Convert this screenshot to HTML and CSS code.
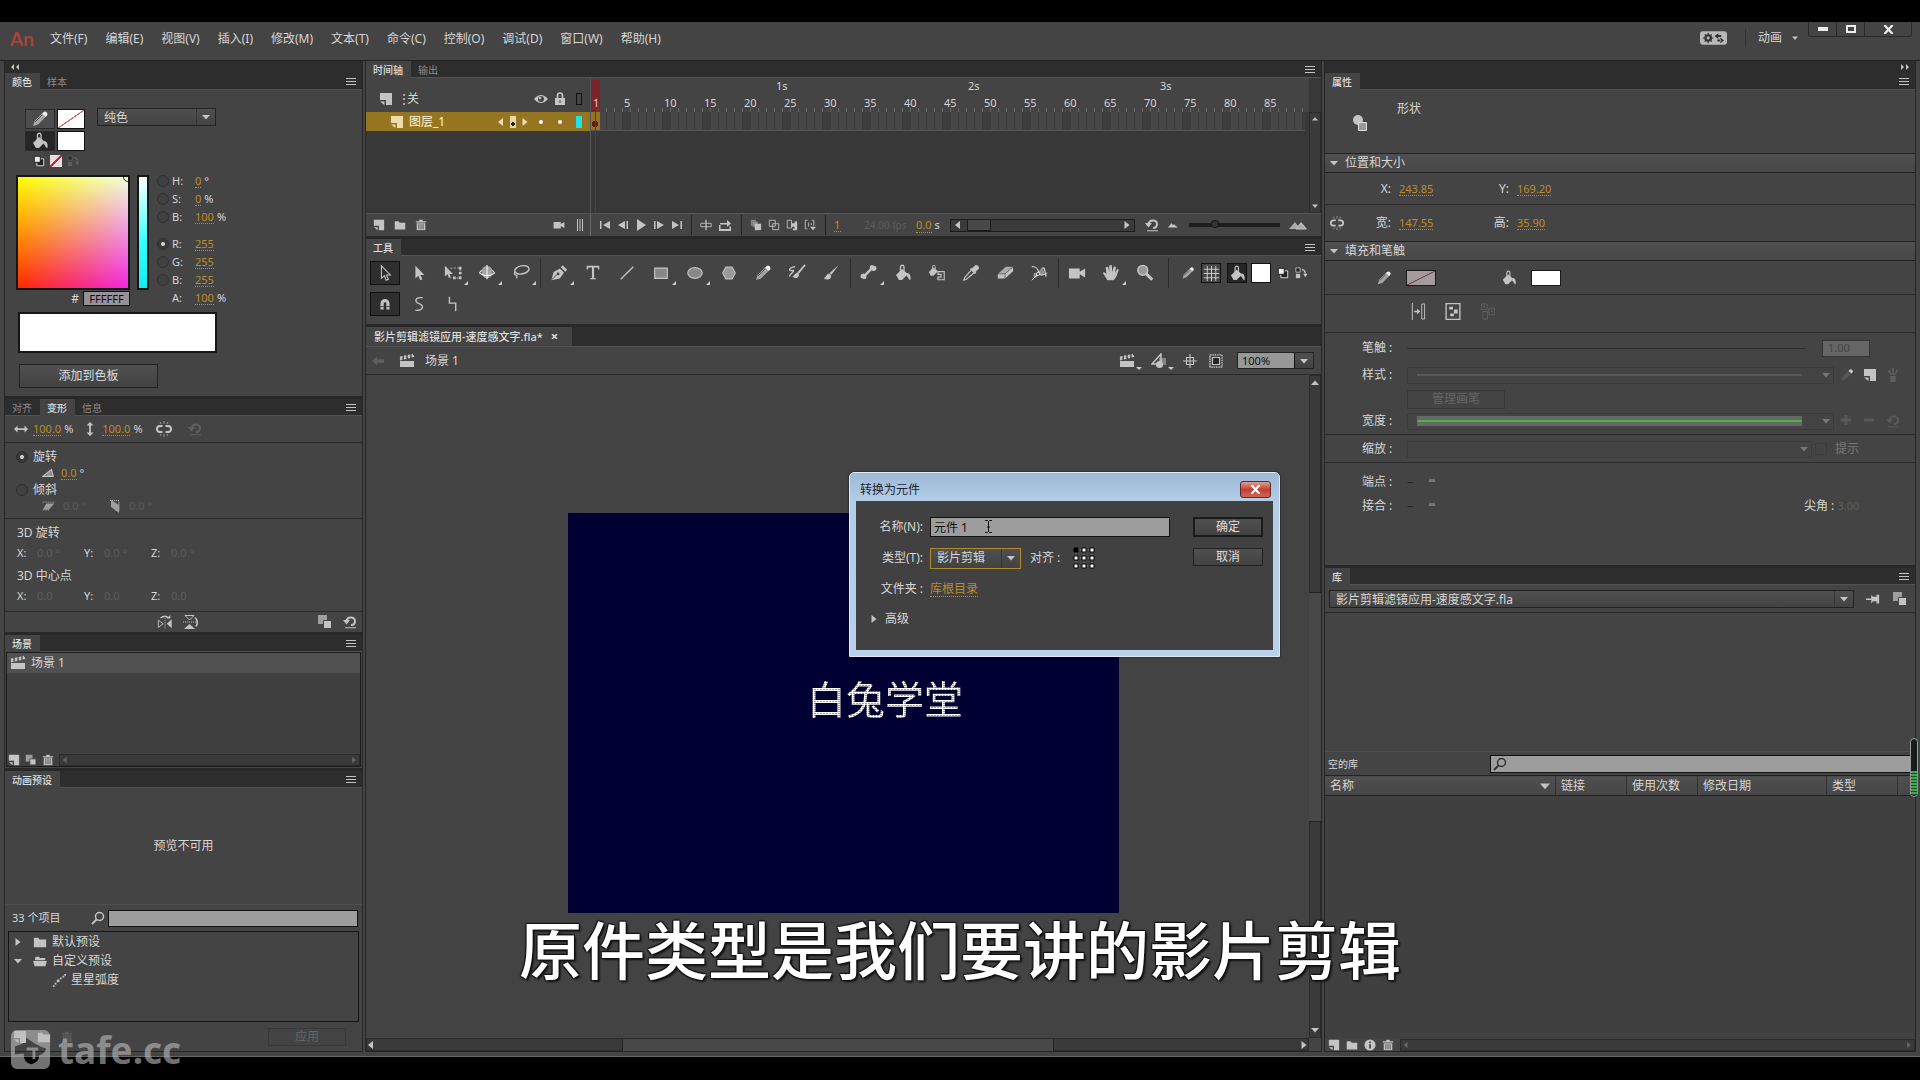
FILE: index.html
```html
<!DOCTYPE html>
<html lang="zh-CN">
<head>
<meta charset="utf-8">
<title>影片剪辑滤镜应用-速度感文字.fla</title>
<link rel="stylesheet" href="styles.css">
</head>
<body>
<svg class="sprite" aria-hidden="true">
  <symbol id="menu" viewBox="0 0 12 10"><path d="M1 1.500h10M1 4.500h10M1 7.500h10" stroke="currentColor"/></symbol>
  <symbol id="pencil" viewBox="0 0 18 18"><path d="M2 16l1.500-5L11 3.500l3.500 3.500L7 14.500z" opacity=".75"/><path d="M4 12l7-7" stroke="#555" fill="none"/><path d="M11 3.500l1.500-1.300a2.500 2.500 0 0 1 3.500 3.500L14.500 7z" fill="#eee"/></symbol>
  <symbol id="bucket" viewBox="0 0 18 18"><path d="M2 11l6-6 6 5-6 6H5z"/><path d="M6.500 9V3a1.500 1.500 0 0 1 3.500 0v5" fill="none" stroke="currentColor" stroke-width="1.300"/><path d="M13 9c3 0 4 3 3.500 7-2 0-2-3-4-4z"/></symbol>
  <symbol id="page" viewBox="0 0 14 14"><path d="M1 1h12v12H7V8H1z"/><path d="M1 9.500h4.500V13z"/></symbol>
  <symbol id="folder" viewBox="0 0 16 14"><path d="M1 2h5l1.500 2H15v9H1z"/></symbol>
  <symbol id="folderopen" viewBox="0 0 16 14"><path d="M3 2h4l1 1.500h6V6H2z"/><path d="M0 7h16l-2 6H2z"/></symbol>
  <symbol id="trash" viewBox="0 0 14 14"><path d="M5 1h4v1.500h4V4H1V2.500h4z"/><path d="M2 5h10v8H2z"/><path d="M4.500 6v6M7 6v6M9.500 6v6" stroke="#444"/></symbol>
  <symbol id="clap" viewBox="0 0 16 14"><path d="M1 7h14v6H1z"/><path d="M1 5.500L15 2M1 3.500L14 .8" stroke="currentColor" stroke-width="2" stroke-dasharray="2.500 1.500" fill="none"/></symbol>
  <symbol id="eye" viewBox="0 0 14 10"><path d="M0 5q7-8 14 0-7 8-14 0z"/><circle cx="7" cy="5" r="3" fill="#444"/><circle cx="6" cy="4" r="1.300"/></symbol>
  <symbol id="lock" viewBox="0 0 12 14"><path d="M1 6h10v7H1z"/><path d="M3.500 6V3.500a2.500 2.500 0 0 1 5 0V6" stroke="currentColor" stroke-width="1.700" fill="none"/><path d="M5.500 8h1v3h-1z" fill="#444"/></symbol>
  <symbol id="left" viewBox="0 0 8 8"><path d="M6 0v8L1 4z"/></symbol>
  <symbol id="right" viewBox="0 0 8 8"><path d="M1.500 0v8l5-4z"/></symbol>
  <symbol id="down" viewBox="0 0 8 8"><path d="M0 2h8L4 6.500z"/></symbol>
  <symbol id="up" viewBox="0 0 8 8"><path d="M0 6h8L4 1.500z"/></symbol>
  <symbol id="undo" viewBox="0 0 14 14"><path d="M3.500 6.500C4 1 12 1.500 12 6c0 3-2 4-4 4" stroke="currentColor" stroke-width="2" fill="none"/><path d="M0 5h7L3.500 9.500zM2 12.300h11v1H2z"/></symbol>
  <symbol id="unlink" viewBox="0 0 16 16"><path d="M6.500 5H4a3 3 0 0 0 0 6h2.500M9.500 5H12a3 3 0 0 1 0 6H9.500" stroke="currentColor" stroke-width="2" fill="none"/><path d="M8 0v3M8 13v3M4 1l1 2M12 1l-1 2M4 15l1-2M12 15l-1-2" stroke="currentColor" opacity=".7"/></symbol>
  <symbol id="search" viewBox="0 0 14 14"><circle cx="8.500" cy="5.500" r="4" fill="none" stroke="currentColor" stroke-width="1.500"/><path d="M1 13l4.500-4.500" stroke="currentColor" stroke-width="2"/></symbol>
  <symbol id="copy" viewBox="0 0 16 16"><path d="M1 1h9v9H1z" opacity=".7"/><path d="M6.500 6.500h8v8h-8z" stroke="#444" stroke-width="1"/></symbol>
  <symbol id="harrow" viewBox="0 0 16 10"><path d="M0 5l4-4v3h8V1l4 4-4 4V6H4v3z"/></symbol>
  <symbol id="varrow" viewBox="0 0 10 16"><path d="M5 0l4 4H6v8h3l-4 4-4-4h3V4H1z"/></symbol>
  <symbol id="angle" viewBox="0 0 14 10"><path d="M1 9h12L11 1z" fill="none" stroke="currentColor" stroke-width="1.500"/><path d="M6 9a5 5 0 0 0-1-2l5-5 2 7z" opacity=".6"/></symbol>
  <symbol id="skewh" viewBox="0 0 16 12"><path d="M5 3h9l-6 7H1z" opacity=".7"/><path d="M1 1.500h14M1 10.500h8" stroke="currentColor" stroke-dasharray="1 1"/></symbol>
  <symbol id="skewv" viewBox="0 0 12 14"><path d="M2 1l8 5v8L2 8z" opacity=".7"/><path d="M1 1.500h9v10" stroke="currentColor" stroke-dasharray="1 1" fill="none"/></symbol>
  <symbol id="fliph" viewBox="0 0 18 16"><path d="M1.500 6v8L7 10z" fill="none" stroke="currentColor"/><path d="M16.500 5v10L11 10z"/><path d="M9 4v12" stroke="currentColor" stroke-dasharray="1 1"/><path d="M4 3.500q5-4 9 0" fill="none" stroke="currentColor" stroke-width="1.500"/><path d="M11 4h4V0z"/></symbol>
  <symbol id="flipv" viewBox="0 0 16 16"><path d="M2 1.500h9L6.500 6z" fill="none" stroke="currentColor"/><path d="M1 15h11L6.500 10z"/><path d="M0 8h13" stroke="currentColor" stroke-dasharray="1 1"/><path d="M12 3.500q4 4 1 9" fill="none" stroke="currentColor" stroke-width="1.500"/></symbol>
  <symbol id="arrow" viewBox="0 0 20 20"><path d="M6 2v14l3.300-3 2 5 2.500-1-2.200-4.800H16z" fill="none" stroke="currentColor" stroke-width="1.200"/></symbol>
  <symbol id="arrowf" viewBox="0 0 20 20"><path d="M6 2v14l3.300-3 2 5 2.500-1-2.200-4.800H16z"/></symbol>
  <symbol id="xform" viewBox="0 0 20 20"><path d="M1 2v12l3-2.500 1.500 4 2-1L6 11h4z"/><path d="M7 4.500h11v11H7" fill="none" stroke="currentColor" stroke-dasharray="2 2"/><path d="M16.500 3h3v3h-3zM16.500 14h3v3h-3zM10 14h3v3h-3zM16.500 8.500h3v3h-3z"/></symbol>
  <symbol id="sphere" viewBox="0 0 20 20"><path d="M10 2c5 1 6 4 6 7s-2 7-6 7-6-4-6-7 1-6 6-7z" opacity=".75"/><path d="M10 1v16M1.500 10q8.500 6 17 0M1.500 10L4 7M18.500 10L16 7" stroke="#eee" stroke-width="1.300" fill="none"/></symbol>
  <symbol id="lasso" viewBox="0 0 20 20"><ellipse cx="11" cy="6.500" rx="8" ry="4.500" fill="none" stroke="currentColor" stroke-width="1.600" transform="rotate(-12 11 6.500)"/><path d="M4 9c-2 1-1.500 3 0 3s2 2 1 4" fill="none" stroke="currentColor" stroke-width="1.500"/></symbol>
  <symbol id="pen" viewBox="0 0 20 20"><path d="M1.500 18L4 9l7-4 4.500 4.500L11 16z"/><path d="M12 3.500l2-2 5 5-2 2z"/><path d="M2 17.500l6-6" stroke="#444"/><circle cx="9" cy="11" r="1.500" fill="#444"/></symbol>
  <symbol id="type" viewBox="0 0 20 20"><path d="M3 2h14v4h-1.300l-.5-2H11.200v11.500l2.300.6V17h-7v-.9l2.300-.6V4H4.800l-.5 2H3z"/></symbol>
  <symbol id="line" viewBox="0 0 20 20"><path d="M3 17L17 3" stroke="currentColor" stroke-width="1.500"/></symbol>
  <symbol id="rect" viewBox="0 0 20 20"><path d="M3 4.500h14v11.500H3z" fill="#888" stroke="currentColor" stroke-width="1.300"/></symbol>
  <symbol id="oval" viewBox="0 0 20 20"><ellipse cx="10" cy="10" rx="8" ry="6" fill="#888" stroke="currentColor" stroke-width="1.300"/></symbol>
  <symbol id="hex" viewBox="0 0 20 20"><path d="M6.500 3.500h7l3.500 6.500-3.500 6.500h-7L3 10z" fill="#999" stroke="currentColor" stroke-width="1.200"/></symbol>
  <symbol id="brushes" viewBox="0 0 20 20"><path d="M19.500 1L11 9l1.500 1.500zM11 9.500c-3 0-3 3-6 4 3 4 8 2 7-3z"/><path d="M19 1l-7.500 8.500" stroke="currentColor" stroke-width="1.800"/><path d="M8 3C3 3 1 6 2 7s5-1 4 1-5 4-4 6" stroke="currentColor" stroke-width="1.500" fill="none"/></symbol>
  <symbol id="brush" viewBox="0 0 20 20"><path d="M18.500 1L8.500 10l2 2zM8 10.500c-3 0-3 4-6 5 3 3 9 2 8-3z"/></symbol>
  <symbol id="bone" viewBox="0 0 20 20"><path d="M5 11l6-6c-1-3 2-5 4-3 3-1 4 3 3 4-1 2-4 2-5 1l-6 6c1 3-2 5-4 3-3 0-3-4-1-5 1 0 2-1 3 0z"/></symbol>
  <symbol id="inkpot" viewBox="0 0 20 20"><path d="M1 9l5-5 5 4-5 5H3z"/><path d="M5 7V3a1 1 0 0 1 3 0v3" fill="none" stroke="currentColor"/><path d="M11 8.500h7v9h-7v-3h3.500v-3H11z" fill="none" stroke="currentColor" stroke-width="1.300"/></symbol>
  <symbol id="dropper" viewBox="0 0 20 20"><path d="M11 5l4-4q4 0 4 4l-4 4 1 1-2 1-5-5 1-2z"/><path d="M10 7l-7 8-1 3 3-1 8-7" fill="none" stroke="currentColor" stroke-width="1.300"/></symbol>
  <symbol id="eraser" viewBox="0 0 20 20"><path d="M2 11L11 3h8l-9 8z" opacity=".8"/><path d="M2 11h8v5H2zM10 11l9-8v5l-9 8z"/><path d="M2 11h8v5M10 11l9-8" stroke="#444" fill="none" stroke-width=".7"/></symbol>
  <symbol id="warp" viewBox="0 0 20 20"><path d="M2 3c6-1 7 4 8 7s4 3 9 0M14 5c3-3 2 5 4 9" stroke="currentColor" stroke-width="1.500" fill="none"/><path d="M9 9l5-6 2 8q-4 3-7-2zM4 10h4v5H4z" opacity=".6"/><path d="M2 18l7-7" stroke="#eee"/><circle cx="9" cy="11" r="1.800" fill="#444" stroke="#eee"/></symbol>
  <symbol id="camera" viewBox="0 0 20 16"><path d="M1 3h12v3.500L19 3v10l-6-3.500V14H1z"/></symbol>
  <symbol id="hand" viewBox="0 0 20 20"><path d="M6 18L1 10q1-2 4 1L4 4q2-2 3 0l1 5V2q2-2 3 0l.3 7L13 3q2-1 2.500 1L14.500 10l2-4q2-1 2 1L16 14l-3 4z"/></symbol>
  <symbol id="loupe" viewBox="0 0 20 20"><circle cx="7.500" cy="7" r="5.500" fill="#999" stroke="currentColor" stroke-width="1.600"/><path d="M11.500 11l6.500 6.500" stroke="currentColor" stroke-width="3.500"/></symbol>
  <symbol id="grid" viewBox="0 0 20 20"><path d="M1 5h18M1 10h18M1 15h18M5 1v18M10 1v18M15 1v18" stroke="#ddd" stroke-width="1"/></symbol>
  <symbol id="bw" viewBox="0 0 14 14"><path d="M4.500 4.500h8v8h-8z" fill="#222" stroke="#eee"/><path d="M1.500 1.500h7v7h-7z" fill="#eee" stroke="#111"/></symbol>
  <symbol id="swap" viewBox="0 0 14 14"><path d="M1 1h5v5H1z" fill="#222" stroke="currentColor"/><path d="M1 8h5v5H1z"/><path d="M8 3q4 0 4 5" fill="none" stroke="currentColor" stroke-width="1.500"/><path d="M9.500 8h5L12 12z"/></symbol>
  <symbol id="magnet" viewBox="0 0 20 20"><path d="M5 16V9.500a5 5 0 0 1 10 0V16h-3.500V9.500a1.500 1.500 0 0 0-3 0V16z"/><path d="M5 13h3.500M11.500 13H15" stroke="#333"/></symbol>
  <symbol id="smooth" viewBox="0 0 20 20"><path d="M14 3C6 2 4 7 10 9.500s5 8-4 7.500" fill="none" stroke="currentColor" stroke-width="1.500"/></symbol>
  <symbol id="straight" viewBox="0 0 20 20"><path d="M6 2v7h7v9" fill="none" stroke="currentColor" stroke-width="1.500"/></symbol>
  <symbol id="first" viewBox="0 0 12 10"><path d="M1 1h1.500v8H1zM11 1v8L4 5z"/></symbol>
  <symbol id="prev" viewBox="0 0 12 10"><path d="M9.500 1H11v8H9.500zM8 1v8L1 5z"/></symbol>
  <symbol id="play" viewBox="0 0 12 12"><path d="M2 0v12l9-6z"/></symbol>
  <symbol id="next" viewBox="0 0 12 10"><path d="M1 1h1.500v8H1zM4 1v8l7-4z"/></symbol>
  <symbol id="last" viewBox="0 0 12 10"><path d="M9.500 1H11v8H9.500zM1 1v8l7-4z"/></symbol>
  <symbol id="center" viewBox="0 0 14 12"><path d="M1 4h12v4H1z" fill="none" stroke="currentColor"/><path d="M7 0v12" stroke="currentColor" stroke-width="1.500"/></symbol>
  <symbol id="loop" viewBox="0 0 14 12"><path d="M1 6h1.500v4h9V7.500H13V12H1zM2 4h7V1l4 3.500L9 8V5.500H2z"/></symbol>
  <symbol id="onion" viewBox="0 0 14 14"><path d="M1 1h6v2H3v5H1z" opacity=".5"/><path d="M3 3h6v6H3z" opacity=".6"/><path d="M5.500 5.500H13V13H5.500z"/></symbol>
  <symbol id="onionline" viewBox="0 0 14 14"><path d="M1.500 1.500h7v7h-7zM5.500 5.500h7v7h-7z" fill="none" stroke="currentColor"/></symbol>
  <symbol id="multi" viewBox="0 0 14 14"><path d="M1.500 1.500h5v9h-5z" fill="none" stroke="currentColor"/><path d="M6 5h4v4H6zM10 3h3v10H8v-2h2z"/></symbol>
  <symbol id="brackets" viewBox="0 0 14 14"><path d="M4 1.500H1.500v10H4M9 1.500h2.500V8" fill="none" stroke="currentColor"/><path d="M5 4h1v5H5zM8 5h1v2H8zM7 9h7l-3.500 4z"/></symbol>
  <symbol id="hill" viewBox="0 0 12 8"><path d="M0 7l4-5 2 2 1-1 5 4z"/></symbol>
  <symbol id="hills" viewBox="0 0 18 10"><path d="M0 9l6-7 3 4 3-4 6 7z" opacity=".8"/><path d="M7 9l5-6 5 6z" fill="none" stroke="currentColor"/></symbol>
  <symbol id="shapes" viewBox="0 0 16 16"><path d="M1 11L10 1v10z" fill="none" stroke="currentColor" stroke-width="1.500"/><path d="M8 5h7v7H8z" opacity=".5"/><circle cx="8.500" cy="11.500" r="3.500"/></symbol>
  <symbol id="cross" viewBox="0 0 16 16"><path d="M8 0v16M0 8h16M4 4h8v8H4z" fill="none" stroke="currentColor" stroke-width="1.200"/></symbol>
  <symbol id="clip" viewBox="0 0 16 16"><path d="M1 1h14v14H1z" fill="none" stroke="currentColor" stroke-width="2" stroke-dasharray="1 1"/><path d="M4 4h8v8H4z" fill="#222" stroke="currentColor" stroke-width="1.400"/></symbol>
  <symbol id="shapeobj" viewBox="0 0 16 18"><circle cx="6" cy="6" r="5"/><path d="M6.500 8.500h8v8h-8z" fill="#999" stroke="#ddd"/></symbol>
  <symbol id="objdraw" viewBox="0 0 16 18"><path d="M2 0v18" stroke="currentColor"/><path d="M12 1h3v16h-3z" fill="none" stroke="currentColor"/><path d="M4 8.300h3V6l3.500 3L7 12V9.700H4z"/></symbol>
  <symbol id="bind" viewBox="0 0 16 18"><path d="M.7 .7h14.600v16.600H.7z" fill="none" stroke="currentColor" stroke-width="1.400"/><path d="M4 4h4v3H4zM9 7h4v4H9zM5 11h4v3H5z"/></symbol>
  <symbol id="group" viewBox="0 0 16 18"><path d="M1 1h6v6H1zM2.500 9h5v8h-5zM9 5.500h6v7H9z" fill="none" stroke="currentColor"/><path d="M3 3h2v2H3zM11 8h2v2h-2z"/></symbol>
  <symbol id="gear" viewBox="0 0 28 14"><rect width="28" height="14" rx="3" fill="#b8b8b8"/><circle cx="8.500" cy="7" r="3" fill="none" stroke="#333" stroke-width="2"/><path d="M8.500 1.500v11M3 7h11M4.800 3.300l7.400 7.400M12.200 3.300l-7.400 7.400" stroke="#333" stroke-width="1.200"/><circle cx="8.500" cy="7" r="1.500" fill="#b8b8b8"/><path d="M15 5l4-3v6zM18 4h4v2h-4zM25 9.500l-4-3v6zM18 8.500h4v2h-4z" fill="#333"/></symbol>
  <symbol id="pin" viewBox="0 0 16 12"><path d="M0 5.500h6v1.500H0zM6 1l2 2.500h4V1h3v10h-3V8.500H8L6 11z"/></symbol>
  <symbol id="info" viewBox="0 0 14 14"><circle cx="7" cy="7" r="6.500"/><path d="M6 3h2v2H6zM6 6h2v5H6z" fill="#444"/></symbol>
  <symbol id="motion" viewBox="0 0 16 16"><path d="M1 14h2v2H1zM3 11h2v2H3zM5.500 7.500h3v3h-3zM9 5h2v2H9zM12 3h2v2h-2zM14 1h2v2h-2z"/></symbol>
  <symbol id="bars" viewBox="0 0 8 12"><path d="M1.500 0v12M4 0v12M6.500 0v12" stroke="currentColor"/></symbol>
  <symbol id="plus" viewBox="0 0 12 12"><path d="M4.500 1h3v3.500H11v3H7.500V11h-3V7.500H1v-3h3.500z"/></symbol>
  <symbol id="minus" viewBox="0 0 12 12"><path d="M1 4.500h10v3H1z"/></symbol>
  <symbol id="brushlib" viewBox="0 0 14 16"><path d="M4 9h6v7H4zM6 0h2v8H6zM1 3l2-1 3 6H4zM13 3l-2-1-3 6h2z"/></symbol>
  <symbol id="back" viewBox="0 0 14 10"><path d="M0 5l6-5v3h8v4H6v3z"/></symbol>
</svg>

<div class="app">
  <header class="titlebar">
    <strong class="logo">An</strong>
    <nav class="menus"><a href="#">文件(F)</a><a href="#">编辑(E)</a><a href="#">视图(V)</a><a href="#">插入(I)</a><a href="#">修改(M)</a><a href="#">文本(T)</a><a href="#">命令(C)</a><a href="#">控制(O)</a><a href="#">调试(D)</a><a href="#">窗口(W)</a><a href="#">帮助(H)</a></nav>
    <div class="workspace">
      <button class="ic" aria-label="同步设置"><svg class="gear"><use href="#gear"/></svg></button>
      <button class="wsname">动画 <svg class="s6"><use href="#down"/></svg></button>
    </div>
    <div class="winbtns"><button aria-label="最小化"><i class="wmin"></i></button><button aria-label="最大化"><i class="wmax"></i></button><button class="wclose" aria-label="关闭"><svg viewBox="0 0 12 10"><path d="M1.500 0L10.500 10M10.500 0L1.500 10" stroke="#eee" stroke-width="2.500"/></svg></button></div>
  </header>

  <main class="work">
    <aside class="dock left">
      <div class="strip"><svg viewBox="0 0 10 8"><path d="M4 1L1 4l3 3zM9 1L6 4l3 3z"/></svg></div>
      <section class="panel colorpanel">
        <div class="tabs"><button class="tab on">颜色</button><button class="tab">样本</button><svg class="pm"><use href="#menu"/></svg></div>
        <div class="color-top">
          <div class="paints">
            <button class="paintbtn" aria-label="笔触颜色"><svg class="s18"><use href="#pencil"/></svg></button><button class="swatch none" aria-label="无笔触"></button>
            <button class="paintbtn on" aria-label="填充颜色"><svg class="s18"><use href="#bucket"/></svg></button><button class="swatch" aria-label="白色填充"></button>
            <div class="minis"><svg class="s12"><use href="#bw"/></svg><i class="nocolor"></i><svg class="s12 dim"><use href="#swap"/></svg></div>
          </div>
          <span class="combo ctype"><select aria-label="颜色类型"><option>纯色</option></select><svg class="s8"><use href="#down"/></svg></span>
        </div>
        <div class="color-mid">
          <div class="pickers">
            <div class="field"><i class="ring"></i></div><div class="lum"></div>
            <label class="hex"># <input value="FFFFFF"></label>
          </div>
          <div class="chan">
            <label><input type="radio" name="c"><span>H:</span><a href="#">0</a> °</label>
            <label><input type="radio" name="c"><span>S:</span><a href="#">0</a> %</label>
            <label class="gap"><input type="radio" name="c"><span>B:</span><a href="#">100</a> %</label>
            <label><input type="radio" name="c" checked><span>R:</span><a href="#">255</a></label>
            <label><input type="radio" name="c"><span>G:</span><a href="#">255</a></label>
            <label><input type="radio" name="c"><span>B:</span><a href="#">255</a></label>
            <div class="alpha"><span>A:</span><a href="#">100</a> %</div>
          </div>
        </div>
        <div class="preview-color"></div>
        <button class="btn addsw">添加到色板</button>
      </section>

      <section class="panel">
        <div class="tabs"><button class="tab">对齐</button><button class="tab on">变形</button><button class="tab">信息</button><svg class="pm"><use href="#menu"/></svg></div>
        <div class="scale-row"><svg class="s14"><use href="#harrow"/></svg><span><a href="#">100.0</a> %</span><svg class="s14 va"><use href="#varrow"/></svg><span><a href="#">100.0</a> %</span><svg class="s16 ul"><use href="#unlink"/></svg><svg class="s14 dim ud"><use href="#undo"/></svg></div>
        <div class="rot">
          <label><input type="radio" name="r" checked>旋转</label>
          <div class="sub"><svg class="s12"><use href="#angle"/></svg><span><a href="#">0.0</a> °</span></div>
          <label><input type="radio" name="r">倾斜</label>
          <div class="sub"><svg class="s14"><use href="#skewh"/></svg><span class="off">0.0 °</span><svg class="s14"><use href="#skewv"/></svg><span class="off">0.0 °</span></div>
        </div>
        <div class="three">
          <div>3D 旋转</div>
          <div class="xyz"><span>X:</span><span class="off">0.0 °</span><span>Y:</span><span class="off">0.0 °</span><span>Z:</span><span class="off">0.0 °</span></div>
          <div>3D 中心点</div>
          <div class="xyz"><span>X:</span><span class="off">0.0</span><span>Y:</span><span class="off">0.0</span><span>Z:</span><span class="off">0.0</span></div>
        </div>
        <div class="xfoot"><button class="ic" aria-label="水平翻转"><svg class="s16"><use href="#fliph"/></svg></button><button class="ic" aria-label="垂直翻转"><svg class="s16"><use href="#flipv"/></svg></button><button class="ic push" aria-label="复制并变形"><svg class="s16"><use href="#copy"/></svg></button><button class="ic" aria-label="重置"><svg class="s14"><use href="#undo"/></svg></button></div>
      </section>

      <section class="panel">
        <div class="tabs"><button class="tab on">场景</button><svg class="pm"><use href="#menu"/></svg></div>
        <div class="scenes">
          <div class="scene-row"><svg class="s16"><use href="#clap"/></svg>场景 1</div>
          <div class="minibar"><svg class="s12"><use href="#page"/></svg><svg class="s12"><use href="#copy"/></svg><svg class="s12"><use href="#trash"/></svg><div class="hs"><svg class="s6"><use href="#left"/></svg><svg class="s6"><use href="#right"/></svg></div></div>
        </div>
      </section>

      <section class="panel grow">
        <div class="tabs"><button class="tab on">动画预设</button><svg class="pm"><use href="#menu"/></svg></div>
        <div class="nopreview">预览不可用</div>
        <div class="psearch"><span>33 个项目</span><svg class="s14"><use href="#search"/></svg><input aria-label="搜索预设"></div>
        <ul class="tree">
          <li><svg class="s8"><use href="#right"/></svg><svg class="s14"><use href="#folder"/></svg>默认预设</li>
          <li><svg class="s8"><use href="#down"/></svg><svg class="s14"><use href="#folderopen"/></svg>自定义预设</li>
          <li class="child"><svg class="s14"><use href="#motion"/></svg>星星弧度</li>
        </ul>
        <div class="pfoot"><svg class="s14"><use href="#page"/></svg><svg class="s14"><use href="#folder"/></svg><svg class="s12 dim"><use href="#trash"/></svg><button class="btn off" disabled>应用</button></div>
      </section>
    </aside>

    <section class="center">
      <section class="panel">
        <div class="tabs"><button class="tab on">时间轴</button><button class="tab">输出</button><svg class="pm"><use href="#menu"/></svg></div>
        <div class="timeline">
          <div class="layers">
            <div class="lhead"><svg class="s14"><use href="#page"/></svg><span class="dots">⋮</span><span>关</span><svg class="s14 push"><use href="#eye"/></svg><svg class="s14"><use href="#lock"/></svg><i class="outline"></i></div>
            <div class="layer"><svg class="s14"><use href="#page"/></svg><span>图层_1</span><svg class="s8 push"><use href="#left"/></svg><i class="key"></i><svg class="s8"><use href="#right"/></svg><i class="dot"></i><i class="dot"></i><i class="outline cyan"></i></div>
          </div>
          <div class="frames">
            <div class="secs"><span>1s</span><span>2s</span><span>3s</span></div>
            <div class="nums"><span class="one">1</span><span>5</span><span>10</span><span>15</span><span>20</span><span>25</span><span>30</span><span>35</span><span>40</span><span>45</span><span>50</span><span>55</span><span>60</span><span>65</span><span>70</span><span>75</span><span>80</span><span>85</span></div>
            <div class="cells"></div>
            <div class="playhead"></div>
          </div>
          <div class="vs tvs"><svg class="s6"><use href="#up"/></svg><svg class="s6"><use href="#down"/></svg></div>
        </div>
        <div class="tfoot">
          <div class="tleft"><svg class="s12"><use href="#page"/></svg><svg class="s12"><use href="#folder"/></svg><svg class="s12"><use href="#trash"/></svg><svg class="s12 push"><use href="#camera"/></svg><svg class="s12"><use href="#bars"/></svg></div>
          <div class="tctl"><svg class="s12"><use href="#first"/></svg><svg class="s12"><use href="#prev"/></svg><svg class="s12"><use href="#play"/></svg><svg class="s12"><use href="#next"/></svg><svg class="s12"><use href="#last"/></svg></div>
          <div class="tctl two"><svg class="s12"><use href="#center"/></svg><svg class="s14"><use href="#loop"/></svg></div>
          <div class="tctl four"><svg class="s12"><use href="#onion"/></svg><svg class="s12"><use href="#onionline"/></svg><svg class="s12"><use href="#multi"/></svg><svg class="s12"><use href="#brackets"/></svg></div>
          <div class="tnum"><a href="#">1</a><span class="off">24.00 fps</span><span><a href="#">0.0</a> s</span></div>
          <div class="hs tscroll"><svg class="s8"><use href="#left"/></svg><i></i><svg class="s8 push"><use href="#right"/></svg></div>
          <svg class="s14"><use href="#undo"/></svg><svg class="s10"><use href="#hill"/></svg><div class="zoomtrack"><i></i></div><svg class="s18"><use href="#hills"/></svg>
        </div>
      </section>

      <section class="panel">
        <div class="tabs"><button class="tab on">工具</button><svg class="pm"><use href="#menu"/></svg></div>
        <div class="tools">
          <button class="tool on"><svg><use href="#arrow"/></svg></button><button class="tool"><svg><use href="#arrowf"/></svg></button><button class="tool more"><svg><use href="#xform"/></svg></button><button class="tool more"><svg><use href="#sphere"/></svg></button><button class="tool more"><svg><use href="#lasso"/></svg></button><i class="sep"></i>
          <button class="tool more"><svg><use href="#pen"/></svg></button><button class="tool"><svg><use href="#type"/></svg></button><button class="tool"><svg><use href="#line"/></svg></button><button class="tool more"><svg><use href="#rect"/></svg></button><button class="tool more"><svg><use href="#oval"/></svg></button><button class="tool"><svg><use href="#hex"/></svg></button><button class="tool"><svg><use href="#pencil"/></svg></button><button class="tool"><svg><use href="#brushes"/></svg></button><button class="tool"><svg><use href="#brush"/></svg></button><i class="sep"></i>
          <button class="tool more"><svg><use href="#bone"/></svg></button><button class="tool"><svg><use href="#bucket"/></svg></button><button class="tool"><svg><use href="#inkpot"/></svg></button><button class="tool"><svg><use href="#dropper"/></svg></button><button class="tool"><svg><use href="#eraser"/></svg></button><button class="tool"><svg><use href="#warp"/></svg></button><i class="sep"></i>
          <button class="tool"><svg><use href="#camera"/></svg></button><button class="tool more"><svg><use href="#hand"/></svg></button><button class="tool"><svg><use href="#loupe"/></svg></button><i class="sep wide"></i>
          <div class="toolcolors"><svg class="s14"><use href="#pencil"/></svg><button class="sq"><svg><use href="#grid"/></svg></button><button class="sq dark"><svg><use href="#bucket"/></svg></button><button class="sq white" aria-label="填充"></button><svg class="s12"><use href="#bw"/></svg><svg class="s12"><use href="#swap"/></svg></div>
        </div>
        <div class="tools opts"><button class="tool on"><svg><use href="#magnet"/></svg></button><button class="tool"><svg><use href="#smooth"/></svg></button><button class="tool"><svg><use href="#straight"/></svg></button></div>
      </section>

      <section class="panel doc">
        <div class="tabs doctabs"><button class="tab on">影片剪辑滤镜应用-速度感文字.fla* <b>×</b></button></div>
        <div class="scenebar"><svg class="s12 dim"><use href="#back"/></svg><svg class="s16"><use href="#clap"/></svg><span>场景 1</span>
          <div class="sbtools"><button class="ic dd"><svg class="s16"><use href="#clap"/></svg></button><button class="ic dd"><svg class="s16"><use href="#shapes"/></svg></button><button class="ic"><svg class="s14"><use href="#cross"/></svg></button><button class="ic"><svg class="s14"><use href="#clip"/></svg></button></div>
          <span class="combo zoom"><input value="100%" aria-label="缩放比例"><svg class="s8"><use href="#down"/></svg></span>
        </div>
        <div class="canvas">
          <div class="pasteboard"><div class="stage"></div><div class="art">白兔学堂</div></div>
          <div class="vs"><svg class="s8"><use href="#up"/></svg><i></i><svg class="s8"><use href="#down"/></svg></div>
          <div class="hs chs"><svg class="s8"><use href="#left"/></svg><i></i><svg class="s8"><use href="#right"/></svg></div>
        </div>
      </section>
    </section>

    <aside class="dock right">
      <div class="strip end"><svg viewBox="0 0 10 8"><path d="M1 1l3 3-3 3zM6 1l3 3-3 3z"/></svg></div>
      <section class="panel props">
        <div class="tabs"><button class="tab on">属性</button><svg class="pm"><use href="#menu"/></svg></div>
        <div class="objtype"><svg><use href="#shapeobj"/></svg><span>形状</span></div>
        <h2><svg class="s8"><use href="#down"/></svg>位置和大小</h2>
        <div class="prow pos"><i></i><span>X:</span><a href="#">243.85</a><span>Y:</span><a href="#">169.20</a></div>
        <div class="prow size"><svg class="s14"><use href="#unlink"/></svg><span>宽:</span><a href="#">147.55</a><span>高:</span><a href="#">35.90</a></div>
        <h2><svg class="s8"><use href="#down"/></svg>填充和笔触</h2>
        <div class="prow fills"><i></i><svg class="s16"><use href="#pencil"/></svg><button class="chip none" aria-label="无"></button><svg class="s16"><use href="#bucket"/></svg><button class="chip" aria-label="白色"></button></div>
        <div class="modes"><svg><use href="#objdraw"/></svg><svg><use href="#bind"/></svg><svg class="dim"><use href="#group"/></svg></div>
        <div class="strokes">
          <div class="srow r1"><span>笔触 :</span><div class="sline"></div><input class="dimin" value="1.00" disabled aria-label="笔触大小"></div>
          <div class="srow r2"><span>样式 :</span><div class="scombo"><i class="plain"></i><svg class="s8"><use href="#down"/></svg></div><div class="sic"><svg class="s14 dim"><use href="#pencil"/></svg><svg class="s14"><use href="#page"/></svg><svg class="s14 dim"><use href="#brushlib"/></svg></div></div>
          <div class="srow r3"><span></span><button class="btn off" disabled>管理画笔</button></div>
          <div class="srow r4"><span>宽度 :</span><div class="scombo"><i class="green"></i><svg class="s8"><use href="#down"/></svg></div><div class="sic dim"><svg class="s12"><use href="#plus"/></svg><svg class="s12"><use href="#minus"/></svg><svg class="s14"><use href="#undo"/></svg></div></div>
        </div>
        <div class="scalebox"><div class="srow"><span>缩放 :</span><div class="scombo"><i></i><svg class="s8"><use href="#down"/></svg></div><label class="hint"><input type="checkbox" disabled>提示</label></div></div>
        <div class="caps">
          <div class="srow"><span>端点 :</span><div class="cap">–<i></i></div></div>
          <div class="srow"><span>接合 :</span><div class="cap">–<i></i></div><div class="miter">尖角 : <span class="off">3.00</span></div></div>
        </div>
      </section>
      <section class="panel grow">
        <div class="tabs"><button class="tab on">库</button><svg class="pm"><use href="#menu"/></svg></div>
        <div class="libdoc"><span class="combo"><select aria-label="库文档"><option>影片剪辑滤镜应用-速度感文字.fla</option></select><svg class="s8"><use href="#down"/></svg></span><svg class="s14"><use href="#pin"/></svg><svg class="s16"><use href="#copy"/></svg></div>
        <div class="libprev"></div>
        <div class="libsearch"><span>空的库</span><div><svg class="s14"><use href="#search"/></svg><input aria-label="搜索库"></div></div>
        <div class="libbody"><table><thead><tr><th class="c1">名称<svg class="sort"><use href="#down"/></svg></th><th class="c2">链接</th><th class="c2">使用次数</th><th class="c4">修改日期</th><th class="c2">类型</th><th></th></tr></thead></table></div>
        <div class="minibar lib"><svg class="s12"><use href="#page"/></svg><svg class="s12"><use href="#folder"/></svg><svg class="s12"><use href="#info"/></svg><svg class="s12"><use href="#trash"/></svg><div class="hs"><svg class="s6"><use href="#left"/></svg><svg class="s6"><use href="#right"/></svg></div></div>
      </section>
    </aside>
  </main>
</div>

<form class="dialog" role="dialog" aria-label="转换为元件">
  <div class="dtitle">转换为元件<button type="button" class="dclose" aria-label="关闭"><svg viewBox="0 0 12 10"><path d="M1.500 0L10.500 10M10.500 0L1.500 10" stroke="#fff" stroke-width="2.500"/></svg></button></div>
  <div class="dbody">
    <div class="dform">
      <label for="nm">名称(N):</label><input id="nm" value="元件 1">
      <label for="ty">类型(T):</label><div class="trow"><span class="combo gold"><select id="ty"><option>影片剪辑</option></select><svg class="s8"><use href="#down"/></svg></span><span class="al">对齐 :</span>
        <svg class="reg" viewBox="0 0 22 22"><path d="M3 3h16v16H3zM3 11h16M11 3v16" fill="none" stroke="#888" stroke-dasharray="1 1"/><g fill="#fff" stroke="#000"><path d="M1 1h4v4H1z" fill="#000"/><path d="M9 1h4v4H9zM17 1h4v4h-4zM1 9h4v4H1zM9 9h4v4H9zM17 9h4v4h-4zM1 17h4v4H1zM9 17h4v4H9zM17 17h4v4h-4z"/></g></svg></div>
      <span>文件夹 :</span><a href="#">库根目录</a>
    </div>
    <div class="dbtns"><button type="button" class="btn ok">确定</button><button type="button" class="btn">取消</button></div>
    <div class="adv"><svg class="s8"><use href="#right"/></svg>高级</div>
  </div>
</form>
<svg class="ibeam" viewBox="0 0 9 15"><path d="M1 1.500h2.500l1 1 1-1H8M4.500 2v11M1 13.500h2.500l1-1 1 1H8M3 8h3" fill="none" stroke="#111"/></svg>

<p class="subtitle">原件类型是我们要讲的影片剪辑</p>
<div class="meter"><i></i></div>
<div class="watermark"><svg viewBox="0 0 40 40"><path fill-rule="evenodd" d="M6 0h28a6 6 0 0 1 6 6v28a6 6 0 0 1-6 6H6a6 6 0 0 1-6-6V6a6 6 0 0 1 6-6zM12 5v9L4 17v8l9-1q0 10 8 11 8-2 8-9 6-2 7-7Q26 16 12 5zM16 18h12v3h-3v9h-3v-9h-6z"/></svg><span>tafe.cc</span></div>
</body>
</html>
```
FILE: styles.css
```css
* { box-sizing: border-box; }
html { background: #000; }
body { margin: 0; min-height: 100vh; padding: 22px 0 23px; display: flex; position: relative; overflow: hidden; background: #000; color: #d6d6d6; font: 12px/18px "Noto Sans", "Noto Sans CJK SC", sans-serif; }
button, input, select { font: inherit; color: inherit; border: 0; padding: 0; margin: 0; background: none; border-radius: 0; min-width: 0; }
svg { display: block; fill: currentColor; flex: none; color: #c4c4c4; }
i { font-style: normal; flex: none; display: block; }
a { color: inherit; text-decoration: none; }
h2 { margin: 0; font: inherit; }
.sprite { position: absolute; width: 0; height: 0; }
.s6 { width: 6px; height: 6px; }
.s8 { width: 8px; height: 8px; }
.s10 { width: 10px; height: 8px; }
.s12 { width: 12px; height: 12px; }
.s14 { width: 14px; height: 14px; }
.s16 { width: 16px; height: 16px; }
.s18 { width: 18px; height: 18px; }
.dim, .dim svg { color: #666; opacity: .8; }
.off { color: #5c5c5c; font-size: 11px; }
.push { margin-left: auto; }
.ic { display: flex; align-items: center; }

/* Window frame */
.app { flex: 1; display: flex; flex-direction: column; background: #444; border-bottom: 1px solid #666; min-width: 0; }
.titlebar { height: 38px; display: flex; align-items: flex-start; padding: 0 8px 0 10px; }
.logo { width: 40px; color: #a8443a; font: bold 19px/34px "Lato", sans-serif; }
.menus { display: flex; gap: 18px; line-height: 34px; }
.workspace { margin-left: auto; display: flex; align-items: center; height: 32px; gap: 18px; }
.gear { width: 27px; height: 14px; }
.wsname { display: flex; align-items: center; gap: 10px; border-left: 1px solid #333; padding-left: 12px; margin-right: 10px; }
.winbtns { display: flex; height: 15px; border: 1px solid #2a2a2a; border-top: 0; border-radius: 0 0 3px 3px; }
.winbtns button { width: 28px; display: grid; place-items: center; border-right: 1px solid #2a2a2a; }
.winbtns .wclose { width: 46px; border: 0; }
.wclose svg { width: 11px; height: 9px; }
.wmin { width: 10px; height: 4px; background: #eee; }
.wmax { width: 10px; height: 8px; border: 2px solid #eee; }

.work { flex: 1; display: flex; gap: 2px; padding: 0 4px 4px; background: #444; border-top: 1px solid #222; min-height: 0; }
.dock { display: flex; flex-direction: column; flex: none; min-width: 0; border: solid #262626; border-width: 0 1px 1px; }
.left { width: 359px; }
.right { width: 592px; }
.center { flex: 1; min-width: 0; display: flex; flex-direction: column; border: solid #262626; border-width: 0 1px 1px; }
.strip { height: 12px; background: #2d2d2d; padding: 2px 5px; display: flex; }
.strip svg { width: 10px; height: 8px; }
.end { justify-content: flex-end; }
.panel { display: flex; flex-direction: column; min-width: 0; border-bottom: 3px solid #282828; }
.panel:last-child { border-bottom: 0; }
.grow, .doc { flex: 1; min-height: 0; }
.tabs { height: 17px; display: flex; background: #2d2d2d; border-bottom: 1px solid #525252; font-size: 10px; line-height: 16px; }
.tab { padding: 0 8px 0 7px; height: 17px; color: #8b8b8b; }
.tab.on { background: #444; color: #ddd; font-weight: 500; }
.pm { width: 12px; height: 10px; margin: 4px 5px 0 auto; }
.btn { border: 1px solid #222; background: linear-gradient(#505050, #424242); text-align: center; color: #ddd; }
.btn.off { color: #666; font-size: 12px; border-color: #393939; background: #444; }
.combo { display: flex; align-items: center; border: 1px solid #222; background: linear-gradient(#505050, #424242); }
.combo select, .combo input { flex: 1; appearance: none; height: 100%; outline: 0; }
.combo select { padding-left: 6px; border-right: 1px solid #363636; }
.combo svg { margin: 0 5px; }

/* Color panel */
.color-top { display: flex; height: 82px; padding: 18px 20px 0; align-items: flex-start; }
.paints { display: grid; grid-template-columns: 30px 28px; gap: 2px; padding-top: 1px; width: 72px; }
.paintbtn { height: 20px; display: grid; place-items: center; border: 1px solid #2a2a2a; background: #4c4c4c; }
.paintbtn.on { background: #262626; }
.swatch { border: 1px solid #111; background: #fff; height: 20px; }
.swatch.none { background: linear-gradient(to bottom right, #fff 48%, #c66 49%, #c66 52%, #fff 53%); }
.minis { grid-column: 1 / 3; display: flex; gap: 5px; padding: 2px 8px; }
.nocolor { width: 12px; height: 12px; background: linear-gradient(135deg, #edd 42%, #c24 43%, #c24 57%, #edd 58%); }
.ctype { width: 119px; height: 18px; }
.color-mid { display: flex; height: 140px; padding-left: 11px; }
.pickers { display: grid; grid-template-columns: 114px 12px; grid-template-rows: 115px 15px; gap: 1px 7px; padding-top: 3px; width: 141px; }
.field { border: 2px solid #161616; background: linear-gradient(#0f0, #002800), linear-gradient(to right, #f00, #f000e0); background-blend-mode: screen; overflow: hidden; }
.ring { width: 10px; height: 10px; border: 1px solid #222; border-radius: 50%; margin: -5px -5px 0 auto; }
.lum { border: 2px solid #161616; background: linear-gradient(#fff, #3ff 60%, #1ee); }
.hex { display: flex; justify-content: flex-end; gap: 4px; line-height: 15px; }
.hex input { width: 47px; border: 1px solid #111; background: #979097; color: #111; text-align: center; font-size: 11px; }
.chan { display: flex; flex-direction: column; font-size: 11px; }
.chan label, .alpha { display: flex; align-items: center; height: 18px; gap: 3px; }
.chan span { width: 20px; }
.chan .gap { margin-bottom: 9px; }
.alpha { padding-left: 15px; }
.chan a, .scale-row a, .rot a, .tnum a, .prow a { color: #bd8c26; font-size: 11px; line-height: 13px; border-bottom: 1px dotted #bd8c26; }
input[type=radio] { appearance: none; width: 12px; height: 12px; border: 1px solid #2f2f2f; border-radius: 50%; flex: none; background: #404040; }
input[type=radio]:checked { background: radial-gradient(#ccc 22%, #383838 34%); }
.preview-color { width: 199px; height: 41px; border: 2px solid #161616; background: #fff; margin: 0 0 11px 13px; }
.addsw { width: 139px; height: 24px; margin: 0 0 8px 14px; }

/* Transform panel */
.scale-row { height: 27px; display: flex; align-items: center; padding-left: 9px; border-bottom: 1px solid #2c2c2c; gap: 5px; }
.scale-row span, .rot span { display: flex; gap: 3px; align-items: center; font-size: 11px; }
.va { margin-left: 5px; }
.ul { margin-left: 8px; }
.ud { margin-left: 11px; }
.rot { height: 76px; padding: 5px 11px 0; border-bottom: 1px solid #2c2c2c; }
.rot label { display: flex; align-items: center; gap: 5px; height: 17px; }
.sub { display: flex; align-items: center; gap: 7px; height: 16px; padding-left: 26px; }
.sub span { width: 38px; }
.three { height: 93px; padding: 4px 12px 0; border-bottom: 1px solid #2c2c2c; }
.three > div { height: 20px; line-height: 20px; }
.xyz { display: grid; grid-template-columns: 20px 47px 20px 47px 20px 47px; font-size: 11px; margin-bottom: 3px; }
.xfoot { height: 20px; display: flex; align-items: center; gap: 10px; padding: 0 5px 0 152px; }

.scenes { height: 115px; border: 1px solid #1c1c1c; background: #404040; display: flex; flex-direction: column; justify-content: space-between; margin: 0 1px 1px; }
.scene-row { display: flex; gap: 5px; align-items: center; background: #515151; height: 20px; padding-left: 3px; }
.minibar { display: flex; height: 12px; gap: 5px; align-items: center; padding-left: 1px; }
.hs, .vs { display: flex; align-items: center; justify-content: space-between; background: #3a3a3a; border: 1px solid #2b2b2b; }
.minibar .hs { flex: 1; height: 12px; padding: 0 2px; }
.minibar .hs svg { color: #666; }
.lib { padding-left: 3px; gap: 6px; }

.nopreview { flex: 1; display: grid; place-items: center; border-bottom: 1px solid #4e4e4e; min-height: 80px; }
.psearch { height: 26px; display: flex; align-items: center; padding: 0 4px 0 7px; font-size: 11px; }
.psearch span { width: 79px; }
.psearch input { flex: 1; height: 17px; background: #9d9d9d; border: 1px solid #111; margin-left: 3px; }
.tree { list-style: none; height: 91px; margin: 0 3px; padding: 0; border: 1px solid #151515; }
.tree li { display: flex; align-items: center; height: 19px; gap: 5px; padding-left: 5px; }
.tree li .s8 { margin-right: 6px; }
.tree .child { padding-left: 43px; }
.pfoot { height: 29px; display: flex; align-items: center; gap: 10px; padding: 0 16px 0 8px; }
.pfoot .btn { width: 78px; height: 18px; line-height: 15px; margin-left: auto; }

/* Timeline */
.timeline { display: flex; height: 135px; position: relative; background: #383838; }
.layers { width: 225px; border-right: 1px solid #555; }
.lhead { height: 34px; display: flex; align-items: center; padding: 8px 8px 0 13px; background: #444; gap: 5px; }
.lhead span { width: 12px; }
.lhead .dots { width: 4px; }
.outline { width: 6px; height: 12px; border: 1px solid #111; }
.outline.cyan { background: #1fe3e0; border: 0; }
.layer { height: 19px; display: flex; align-items: center; background: #967520; padding: 0 8px 0 24px; gap: 5px; color: #fff6d8; }
.layer svg { color: #efdcae; }
.key { width: 6px; height: 12px; background: radial-gradient(circle at 3px 8px, #222 2px, #e8d8a8 2px); }
.dot { width: 4px; height: 4px; border-radius: 50%; background: #fff; margin: 0 5px; }
.lhead .outline, .layer .outline { margin-left: 4px; }
.frames { flex: 1; position: relative; overflow: hidden; min-width: 0; }
.secs { height: 17px; display: flex; padding-left: 183px; background: #444; font-size: 11px; line-height: 15px; }
.secs span { width: 192px; padding-left: 2px; flex: none; }
.nums { height: 17px; display: flex; font-size: 11px; line-height: 16px; background: repeating-linear-gradient(90deg, transparent 0 7px, #666 7px 8px) 0 13px / 714px 4px no-repeat, #444; }
.nums span { width: 40px; flex: none; padding-left: 1px; text-shadow: 0 0 2px #444; }
.nums .one { width: 32px; padding-left: 2px; color: #f0c8c8; position: relative; z-index: 1; text-shadow: none; }
.cells { height: 19px; width: 714px; border-bottom: 1px solid #555; background: repeating-linear-gradient(90deg, transparent 0 7px, #3b3b3b 7px 8px), repeating-linear-gradient(90deg, #474747 0 32px, #3e3e3e 32px 40px); }
.playhead { position: absolute; left: 0; top: 1px; width: 9px; height: 134px; background: linear-gradient(rgba(150, 20, 30, .65), rgba(150, 20, 30, .65)) 0 0 / 9px 33px no-repeat, linear-gradient(#862730, #862730) 4px 33px / 1px 101px no-repeat, radial-gradient(circle at 4px 12px, #601c12 3px, #967520 3px) 0 33px / 9px 18px no-repeat; }
.vs { flex-direction: column; width: 12px; padding: 3px 0; }
.tvs { margin-top: 34px; }
.tfoot { height: 23px; display: flex; align-items: center; border-top: 1px solid #555; padding-right: 14px; }
.tleft { width: 225px; display: flex; align-items: center; padding: 0 4px 0 7px; gap: 9px; align-self: stretch; border-right: 1px solid #666; }
.tctl { display: flex; align-items: center; gap: 6px; padding: 0 8px; border-right: 1px solid #222; height: 20px; }
.two, .four { padding: 0 9px 0 8px; }
.tnum { display: flex; align-items: center; font-size: 11px; padding: 0 10px 0 8px; }
.tnum > a { width: 7px; }
.tnum .off { width: 44px; margin: 0 8px 0 23px; white-space: nowrap; font-size: 10px; }
.tscroll { flex: 1; height: 13px; margin-right: 10px; padding: 0 3px; justify-content: flex-start; border-color: #1c1c1c; min-width: 80px; }
.tscroll i { width: 24px; height: 12px; border: 1px solid #1c1c1c; background: #484848; margin-left: 5px; }
.tfoot > .s10 { margin-left: 9px; }
.zoomtrack { width: 91px; height: 4px; background: #1d1d1d; margin: 0 9px 0 11px; }
.zoomtrack i { width: 8px; height: 8px; margin: -3px 0 0 22px; background: #333; border: 1px solid #1a1a1a; border-radius: 3px; }

/* Tools */
.tools { display: flex; align-items: center; gap: 4px; height: 34px; padding: 0 4px; }
.tool { position: relative; width: 30px; height: 24px; display: grid; place-items: center; flex: none; }
.tool svg { width: 18px; height: 18px; }
.tool.on { border: 1px solid #111; background: #2e2e2e; }
.more::after { content: ""; position: absolute; right: 0; bottom: 0; border: 2px solid transparent; border-right-color: #ccc; border-bottom-color: #ccc; }
.sep { width: 1px; margin-right: -1px; height: 30px; background: #2d2d2d; }
.sep.wide { margin-left: 4px; }
.toolcolors { display: flex; align-items: center; gap: 6px; padding-left: 9px; }
.sq { width: 20px; height: 20px; border: 1px solid #111; display: grid; place-items: center; }
.sq svg { width: 17px; height: 17px; }
.dark { background: #262626; }
.white { background: #fff; margin-left: -2px; }
.opts { height: 34px; align-items: flex-start; padding-top: 2px; }

/* Document */
.doctabs { height: 20px; line-height: 18px; }
.doctabs .tab { height: 19px; font-size: 11px; padding: 0 14px 0 8px; }
.doctabs b { margin-left: 5px; font-size: 13px; }
.scenebar { height: 28px; display: flex; align-items: center; padding: 0 7px 0 6px; border-bottom: 1px solid #2a2a2a; }
.scenebar > .s16 { margin: 0 10px 0 15px; }
.sbtools { margin-left: auto; display: flex; gap: 12px; align-items: center; padding-right: 14px; }
.dd { padding-right: 2px; position: relative; margin-right: 2px; }
.dd::after { content: ""; position: absolute; right: -5px; bottom: -1px; border: 3px solid transparent; border-top-color: #ccc; border-bottom: 0; }
.zoom { width: 77px; height: 17px; }
.zoom input { background: #979797; color: #111; padding-left: 4px; font-size: 11px; border-right: 1px solid #111; }
.canvas { flex: 1; display: grid; grid-template: 1fr 13px / 1fr 12px; min-height: 0; }
.pasteboard { position: relative; overflow: hidden; background: #434343; }
.stage { position: absolute; left: 202px; top: 138px; width: 551px; height: 400px; background: #000033; }
.art { position: absolute; left: 441px; top: 294px; font: 39px/56px "Noto Sans CJK SC", sans-serif; color: transparent; background: conic-gradient(#9898c0 25%, #fff 0) 0 0 / 3px 2px; background-clip: text; -webkit-background-clip: text; }
.vs i { background: #484848; border: solid #222; border-width: 1px 0; width: 12px; height: 230px; }
.chs i { width: 432px; height: 12px; background: #484848; border: solid #222; border-width: 0 1px; }

/* Properties */
.objtype { height: 63px; display: flex; padding: 10px 27px; gap: 29px; }
.objtype svg { width: 16px; height: 18px; margin-top: 14px; }
h2 { height: 20px; display: flex; align-items: center; gap: 7px; padding-left: 5px; background: linear-gradient(#505050, #474747); border: solid #222; border-width: 1px 0; }
.prow { display: grid; align-items: center; justify-content: start; padding-left: 5px; border-bottom: 1px solid #2c2c2c; column-gap: 8px; }
.prow > span { text-align: right; white-space: nowrap; }
.prow a, .prow button { justify-self: start; }
.prow svg { justify-self: end; }
.pos { height: 32px; }
.size { height: 36px; border: 0; }
.pos, .size { grid-template-columns: 14px 39px 74px 28px auto; }
.fills { height: 34px; grid-template-columns: 14px 34px 81px 16px auto; column-gap: 14px; }
.chip { width: 30px; height: 16px; border: 1px solid #1a1a1a; background: #fff; }
.fills .none { background: linear-gradient(to bottom right, #a59a9d 48%, #744 49%, #744 52%, #a59a9d 53%); }
.modes { height: 38px; display: flex; align-items: center; gap: 19px; padding: 0 0 4px 85px; border-bottom: 1px solid #2c2c2c; }
.modes svg { width: 16px; height: 17px; }
.srow { display: flex; align-items: center; }
.srow > span { width: 45px; white-space: nowrap; flex: none; }
.strokes { height: 102px; padding: 1px 15px 0 37px; border-bottom: 1px solid #2c2c2c; }
.r1 { height: 28px; }
.r2 { height: 26px; }
.r3 { height: 22px; }
.r4 { height: 22px; }
.sline { flex: 1; height: 1px; background: #2c2c2c; margin-right: 16px; }
.dimin { width: 48px; height: 17px; background: #666; border: 1px solid #333; color: #444; padding-left: 5px; font-size: 11px; margin-right: 33px; }
.strokes .dimin { margin-right: 30px; }
.scombo { flex: 1; height: 17px; display: flex; align-items: center; border: 1px solid #3b3b3b; gap: 20px; padding: 0 3px 0 9px; }
.scombo i { flex: 1; height: 2px; background: #585858; }
.scombo svg { color: #777; }
.scombo .green { height: 10px; background: linear-gradient(#686868 4px, #47b83f 4px 6px, #686868 6px); }
.sic { width: 66px; display: flex; justify-content: space-between; padding-left: 6px; }
.srow .btn { width: 98px; height: 19px; line-height: 16px; }
.scalebox { height: 28px; padding: 5px 15px 0 37px; border-bottom: 1px solid #2c2c2c; }
.scalebox i { background: none; }
.hint { width: 88px; display: flex; align-items: center; gap: 8px; padding-left: 3px; color: #777; }
.hint input { appearance: none; width: 12px; height: 12px; border: 1px solid #3b3b3b; }
.caps { height: 102px; padding: 7px 47px 0 37px; }
.caps .srow { height: 24px; }
.cap { display: flex; gap: 16px; color: #222; }
.cap i { width: 6px; height: 3px; background: #777; margin-top: 6px; }
.miter { margin-left: auto; width: 60px; margin-right: 4px; white-space: nowrap; }

/* Library */
.libdoc { height: 28px; display: flex; align-items: center; gap: 12px; padding: 0 7px 0 4px; border-bottom: 1px solid #2a2a2a; }
.libdoc .combo { flex: 1; height: 18px; }
.libprev { height: 139px; border-bottom: 1px solid #4e4e4e; }
.libsearch { height: 23px; display: flex; align-items: center; padding-left: 3px; font-size: 10px; }
.libsearch span { width: 162px; }
.libsearch div { flex: 1; display: flex; align-items: center; height: 18px; border: 1px solid #111; background: #9d9d9d; padding-left: 2px; }
.libsearch input { flex: 1; }
.libsearch svg { color: #333; }
.libbody { flex: 1; background: #404040; min-height: 60px; }
table { width: 100%; border-collapse: collapse; table-layout: fixed; }
th { height: 20px; padding: 0 5px; font-weight: normal; text-align: left; background: linear-gradient(#505050, #464646); border: solid #222; border-width: 1px 0; box-shadow: inset -1px 0 #303030; white-space: nowrap; line-height: 16px; }
.c1 { width: 231px; }
.c2 { width: 71px; }
.c4 { width: 129px; }
.sort { float: right; width: 12px; height: 10px; margin-top: 3px; }

/* Convert to symbol */
.dialog { position: absolute; left: 849px; top: 472px; width: 431px; border: 1px solid #dfeaf5; border-radius: 5px 5px 0 0; background: linear-gradient(#9db9d6, #b3cde8 28px, #b9d1ea); padding: 0 6px 6px; box-shadow: 0 0 2px #000; }
.dtitle { height: 28px; display: flex; align-items: center; justify-content: space-between; padding: 6px 2px 0 4px; color: #1d2430; }
.dclose { width: 31px; height: 17px; display: grid; place-items: center; border: 1px solid #5c2a2a; border-radius: 3px; background: linear-gradient(#dba093, #c5402f 50%, #cc6553); margin-top: -2px; }
.dclose svg { width: 11px; height: 9px; }
.dbody { background: #414141; height: 149px; display: grid; grid-template-columns: 1fr 70px; padding: 16px 10px 0 14px; grid-template-rows: 92px 20px; }
.dform { display: grid; grid-template-columns: 53px 240px; grid-template-rows: 20px 22px 20px; row-gap: 10px; column-gap: 7px; align-content: start; align-items: center; }
.dform > label, .dform > span { text-align: right; white-space: nowrap; }
.dform > input { height: 20px; background: #9d9d9d; border: 1px solid #111; color: #111; padding-left: 3px; }
.dform > a { color: #bd8c26; border-bottom: 1px dotted #bd8c26; justify-self: start; line-height: 14px; }
.trow { display: flex; align-items: center; }
.gold { width: 91px; height: 21px; border: 1px solid #b08a2c; }
.al { margin: 0 13px 0 9px; }
.reg { width: 22px; height: 22px; }
.dbtns { display: grid; grid-template-rows: 20px 18px; row-gap: 11px; align-content: start; }
.dbtns .btn { line-height: 16px; }
.dbtns .ok { border: 2px solid #1a1a1a; }
.adv { grid-column: 1 / 3; display: flex; align-items: center; gap: 7px; }
.ibeam { position: absolute; left: 984px; top: 519px; width: 9px; height: 15px; }

/* Overlays */
.subtitle { position: absolute; left: 0; right: 0; top: 901px; margin: 0; text-align: center; color: #fff; font: 500 63px/92px "Noto Sans CJK SC", sans-serif; text-shadow: 2px 2px 2px #111, -1px -1px 1px #111, 1px -1px 1px #111, -1px 1px 1px #111; white-space: nowrap; }
.meter { position: absolute; right: 2px; top: 738px; width: 8px; height: 59px; border: 1px solid #999; border-radius: 4px; background: #171d1b; padding-top: 32px; }
.meter i { height: 24px; background: repeating-linear-gradient(#3fa65a 0 2px, #195028 2px 3px); }
.watermark { position: absolute; left: 11px; top: 1030px; display: flex; align-items: center; gap: 8px; color: rgba(190, 190, 190, .6); font: bold 37px/38px "Noto Sans", sans-serif; }
.watermark svg { width: 39px; height: 39px; color: inherit; }
```
